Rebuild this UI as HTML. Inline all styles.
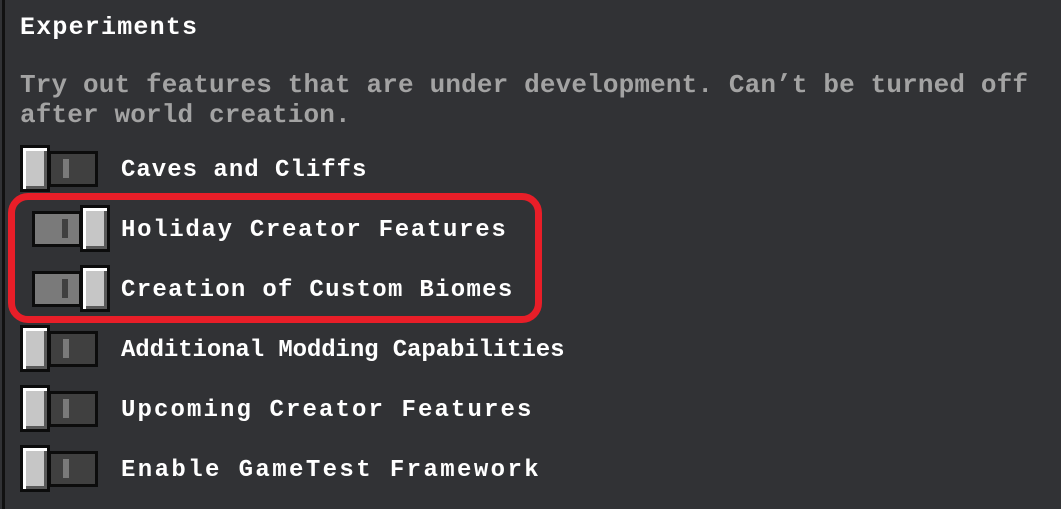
<!DOCTYPE html>
<html><head><style>
body{margin:0;width:1061px;height:509px;background:#313235;position:relative;overflow:hidden;font-family:"Liberation Mono",monospace;}
.bl{position:absolute;left:2px;top:0;width:3px;height:509px;background:#111;}
.t{position:absolute;white-space:nowrap;color:#fff;font-weight:bold;}
.title{left:20px;top:13px;font-size:25px;letter-spacing:1.2px;}
.desc{left:20px;font-size:26px;color:#a3a3a3;letter-spacing:0.15px;}
.lab{left:121px;font-size:24px;letter-spacing:1px;line-height:30px;}
.track{position:absolute;width:44px;height:30px;border:3px solid #0c0c0c;}
.track i{position:absolute;left:12px;top:5px;width:6px;height:19px;}
.knob{position:absolute;width:24px;height:41px;border:3px solid #0c0c0c;background:#c6c6c6;box-shadow:inset 3px 3px 0 #fff,inset -3px -3px 0 #595959;}
.off .track{background:#404040}.off .track i{background:#7a7a7a}
.on .track{background:#7a7a7a}.on .track i{background:#404040}
.red{position:absolute;left:8px;top:193px;width:520px;height:116px;border:7px solid #e81e28;border-radius:20px;}
</style></head><body>
<div class="bl"></div>
<div class="t title">Experiments</div>
<div class="t desc" style="top:70px">Try out features that are under development. Can’t be turned off</div>
<div class="t desc" style="top:100px">after world creation.</div>

<div class="off"><div class="track" style="left:48px;top:151px"><i></i></div><div class="knob" style="left:20px;top:145px"></div></div>
<div class="t lab" style="top:156px">Caves and Cliffs</div>

<div class="on"><div class="track" style="left:32px;top:211px"><i style="left:27px"></i></div><div class="knob" style="left:80px;top:205px"></div></div>
<div class="t lab" style="top:216px;letter-spacing:1.7px">Holiday Creator Features</div>

<div class="on"><div class="track" style="left:32px;top:271px"><i style="left:27px"></i></div><div class="knob" style="left:80px;top:265px"></div></div>
<div class="t lab" style="top:276px;letter-spacing:1.3px">Creation of Custom Biomes</div>

<div class="off"><div class="track" style="left:48px;top:331px"><i></i></div><div class="knob" style="left:20px;top:325px"></div></div>
<div class="t lab" style="top:336px;letter-spacing:-0.1px">Additional Modding Capabilities</div>

<div class="off"><div class="track" style="left:48px;top:391px"><i></i></div><div class="knob" style="left:20px;top:385px"></div></div>
<div class="t lab" style="top:396px;letter-spacing:2.1px">Upcoming Creator Features</div>

<div class="off"><div class="track" style="left:48px;top:451px"><i></i></div><div class="knob" style="left:20px;top:445px"></div></div>
<div class="t lab" style="top:456px;letter-spacing:2.4px">Enable GameTest Framework</div>

<div class="red"></div>
</body></html>
